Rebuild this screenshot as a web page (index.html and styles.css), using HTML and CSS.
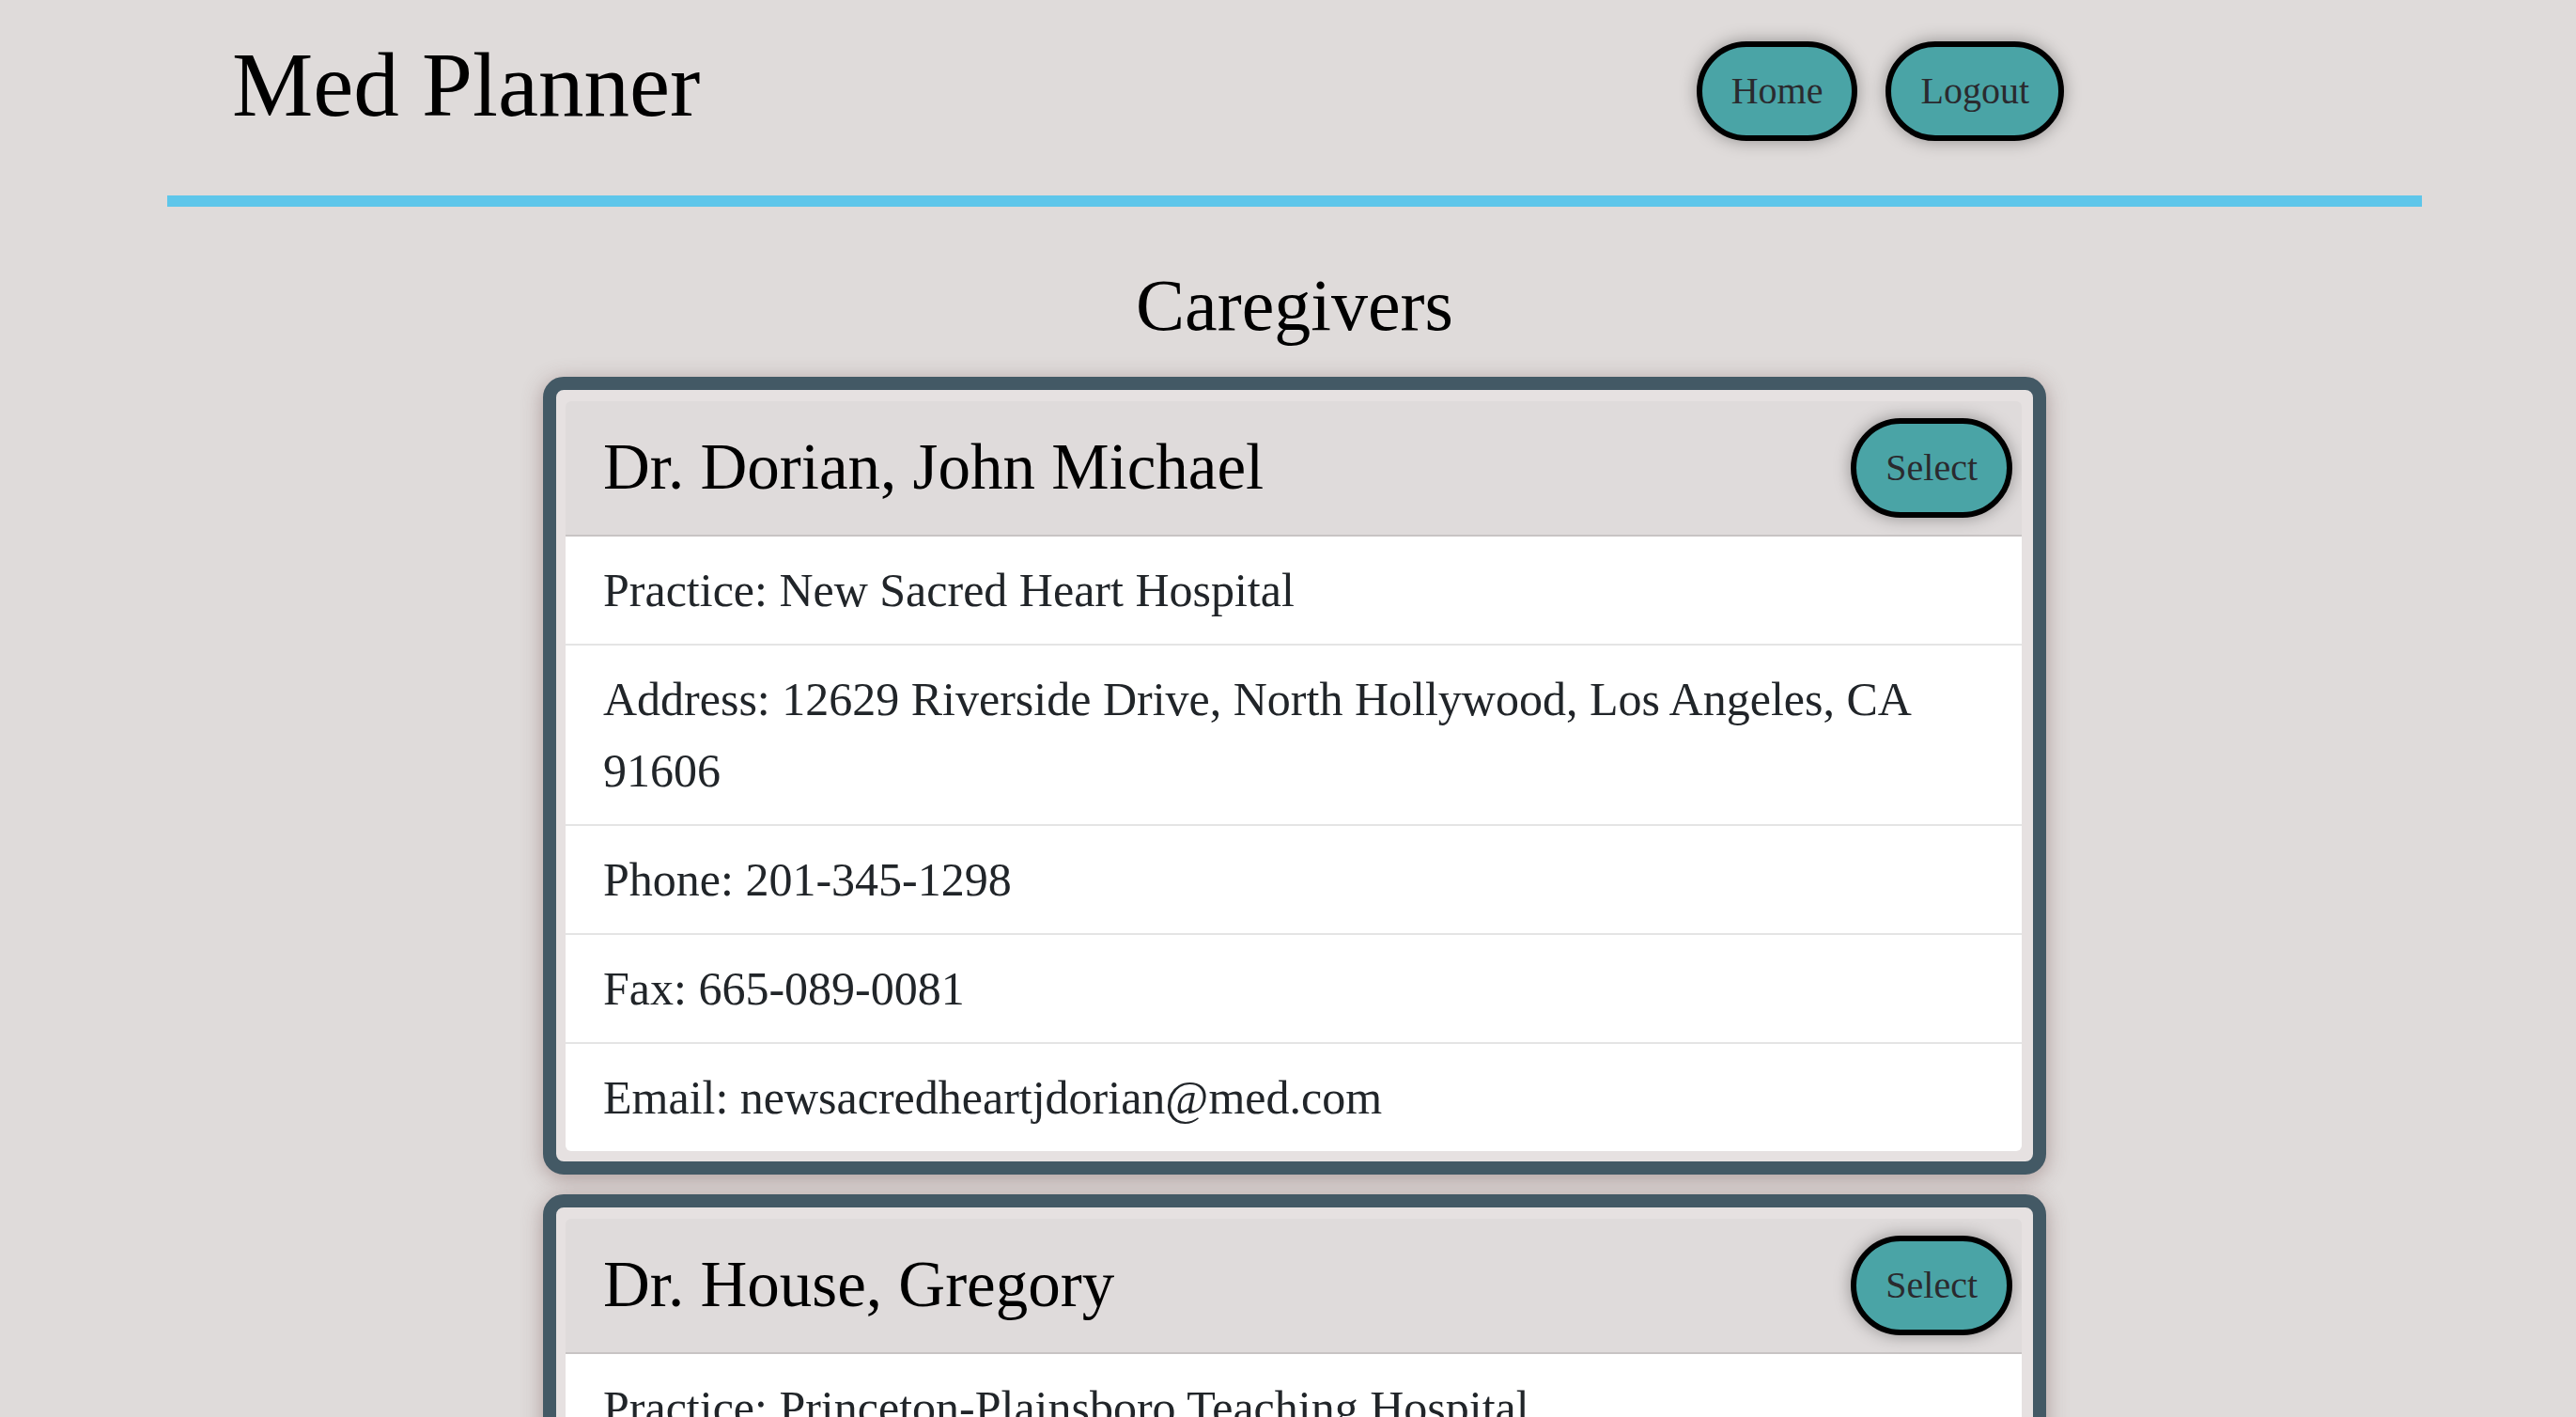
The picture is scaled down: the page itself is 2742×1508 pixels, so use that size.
FILE: index.html
```html
<!DOCTYPE html>
<html lang="en">
<head>
<meta charset="utf-8">
<title>Med Planner</title>
<link rel="stylesheet" href="styles.css">
</head>
<body>
<div class="page">
  <header class="topbar">
    <h1 class="brand">Med Planner</h1>
    <nav class="nav">
      <button class="pill-btn">Home</button>
      <button class="pill-btn">Logout</button>
    </nav>
  </header>
  <div class="rule"></div>
  <h2 class="title">Caregivers</h2>

  <section class="frame">
    <div class="card">
      <div class="card-header">
        <h3 class="name">Dr. Dorian, John Michael</h3>
        <button class="pill-btn">Select</button>
      </div>
      <ul class="info">
        <li class="info-item">Practice: New Sacred Heart Hospital</li>
        <li class="info-item">Address: 12629 Riverside Drive, North Hollywood, Los Angeles, CA 91606</li>
        <li class="info-item">Phone: 201-345-1298</li>
        <li class="info-item">Fax: 665-089-0081</li>
        <li class="info-item">Email: newsacredheartjdorian@med.com</li>
      </ul>
    </div>
  </section>

  <section class="frame">
    <div class="card">
      <div class="card-header">
        <h3 class="name">Dr. House, Gregory</h3>
        <button class="pill-btn">Select</button>
      </div>
      <ul class="info">
        <li class="info-item">Practice: Princeton-Plainsboro Teaching Hospital</li>
        <li class="info-item">Address: 400 Prospect Avenue, Princeton, NJ 08540</li>
        <li class="info-item">Phone: 609-555-0142</li>
        <li class="info-item">Fax: 609-555-0199</li>
        <li class="info-item">Email: ghouse@ppth.com</li>
      </ul>
    </div>
  </section>
</div>
</body>
</html>
```
FILE: styles.css
```css
html, body {
  margin: 0;
  padding: 0;
}
body {
  background: #dfdbda;
  font-family: "Liberation Serif", "Times New Roman", serif;
  color: #000;
}
.page {
  width: 2400px;
  margin-left: 178px;
}
.topbar {
  display: flex;
  align-items: flex-start;
  height: 208px;
}
.brand {
  margin: 33px 0 0 69px;
  font-size: 97px;
  line-height: 1.2;
  font-weight: normal;
}
.nav {
  display: flex;
  gap: 30px;
  margin: 44px 381px 0 auto;
}
.pill-btn {
  font-family: "Liberation Serif", "Times New Roman", serif;
  font-size: 40px;
  line-height: 1.5;
  padding: 17px 31px;
  border: 6px solid #000;
  border-radius: 60px;
  background: #4aa4a6;
  color: #2a2a2e;
  box-shadow: 0 0 18px rgba(0, 0, 0, 0.35);
  cursor: pointer;
}
.rule {
  height: 12px;
  background: #5ec6ea;
}
.title {
  margin: 58px 0 29px;
  text-align: center;
  font-size: 78px;
  line-height: 1.2;
  font-weight: normal;
}
.frame {
  width: 1600px;
  box-sizing: border-box;
  margin: 0 auto 21px;
  border: 14px solid #435965;
  border-radius: 22px;
  padding: 12px 12px 11px 10px;
  background: #e6e1e1;
  box-shadow: 0 4px 22px rgba(110, 75, 75, 0.45);
}
.card {
  border-radius: 6px;
  overflow: hidden;
}
.card-header {
  display: flex;
  align-items: center;
  justify-content: space-between;
  padding: 18px 10px 18px 40px;
  background: #dfdbdb;
  border-bottom: 2px solid #c8c4c4;
}
.name {
  margin: 0;
  font-size: 69px;
  line-height: 1.2;
  font-weight: normal;
  color: #000;
}
.info {
  list-style: none;
  margin: 0;
  padding: 0;
  background: #fff;
}
.info-item {
  padding: 19px 40px;
  font-size: 50px;
  line-height: 76px;
  color: #212529;
}
.info-item + .info-item {
  border-top: 2px solid #e4e4e4;
}
```
